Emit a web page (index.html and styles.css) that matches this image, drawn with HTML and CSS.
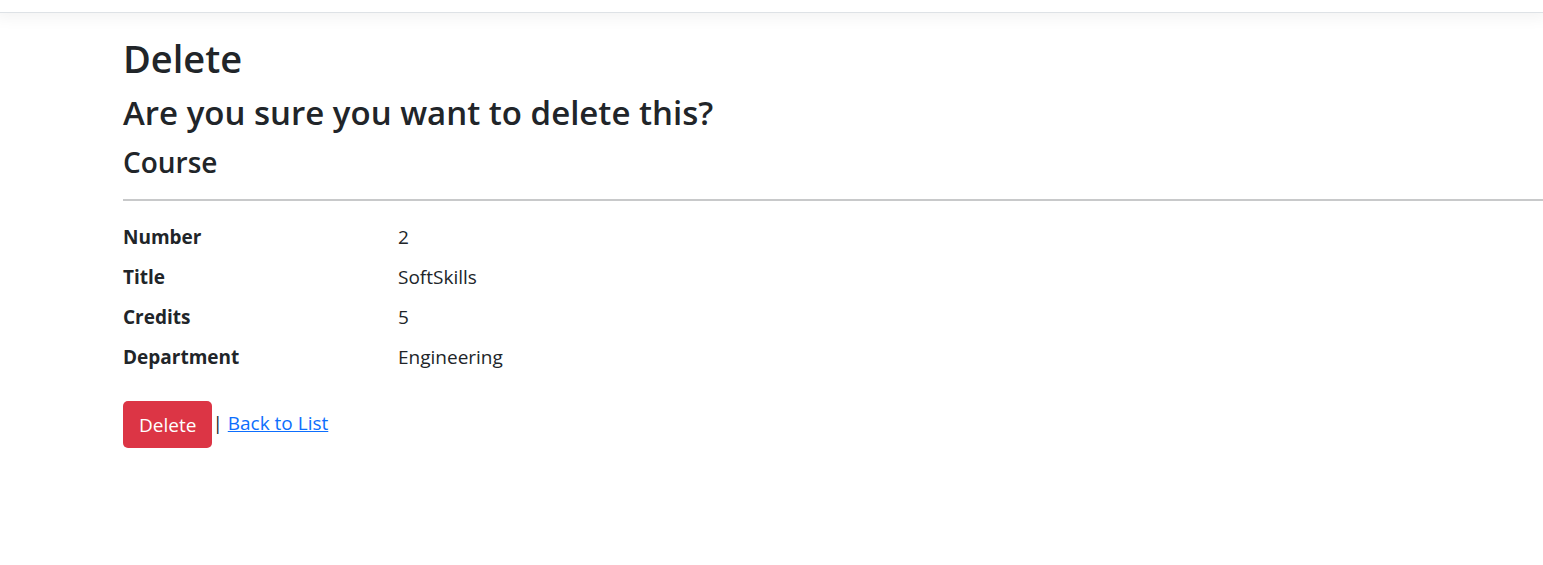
FILE: index.html
```html
<!DOCTYPE html>
<html lang="en">
<head>
<meta charset="utf-8">
<title>Delete</title>
<link rel="stylesheet" href="styles.css">
</head>
<body>
<header class="navbar"></header>
<main class="content">
  <h1 class="title">Delete</h1>
  <h3 class="question">Are you sure you want to delete this?</h3>
  <h4 class="entity">Course</h4>
  <hr class="rule">
  <dl class="details">
    <dt>Number</dt><dd>2</dd>
    <dt>Title</dt><dd>SoftSkills</dd>
    <dt>Credits</dt><dd>5</dd>
    <dt>Department</dt><dd>Engineering</dd>
  </dl>
  <form class="actions">
    <button class="btn-danger" type="submit">Delete</button>
    <span class="links">| <a class="back" href="#">Back to List</a></span>
  </form>
</main>
</body>
</html>
```
FILE: styles.css
```css
* { box-sizing: border-box; }
body {
  margin: 0;
  background: #fff;
  color: #212529;
  font: 19px/30px "Segoe UI", "Open Sans", "Noto Sans", sans-serif;
}
.navbar {
  height: 13px;
  border-bottom: 1px solid #dee2e6;
  box-shadow: 0 0 15px 5px rgba(0, 0, 0, 0.05);
}
.content { padding: 21px 0 0 123px; }
.title, .question, .entity { margin: 0 0 10px; font-weight: 600; }
.title { font-size: 38px; line-height: 48px; }
.question { font-size: 33px; line-height: 42px; }
.entity { font-size: 28px; line-height: 36px; }
.rule { margin: 19px 0 21px; border: 0; border-top: 2px solid #c8c9ca; }
.details {
  display: grid;
  grid-template-columns: 275px 1fr;
  row-gap: 10px;
  margin: 0 0 29px;
}
.details dt { font-weight: 700; }
.details dd { margin: 0; }
.actions { display: flex; align-items: flex-start; }
.btn-danger {
  padding: 9px 16px 8px;
  border: 0;
  border-radius: 5px;
  background: #dc3545;
  color: #fff;
  font: inherit;
}
.links { padding-top: 7px; }
.back { color: #0d6efd; }
```
